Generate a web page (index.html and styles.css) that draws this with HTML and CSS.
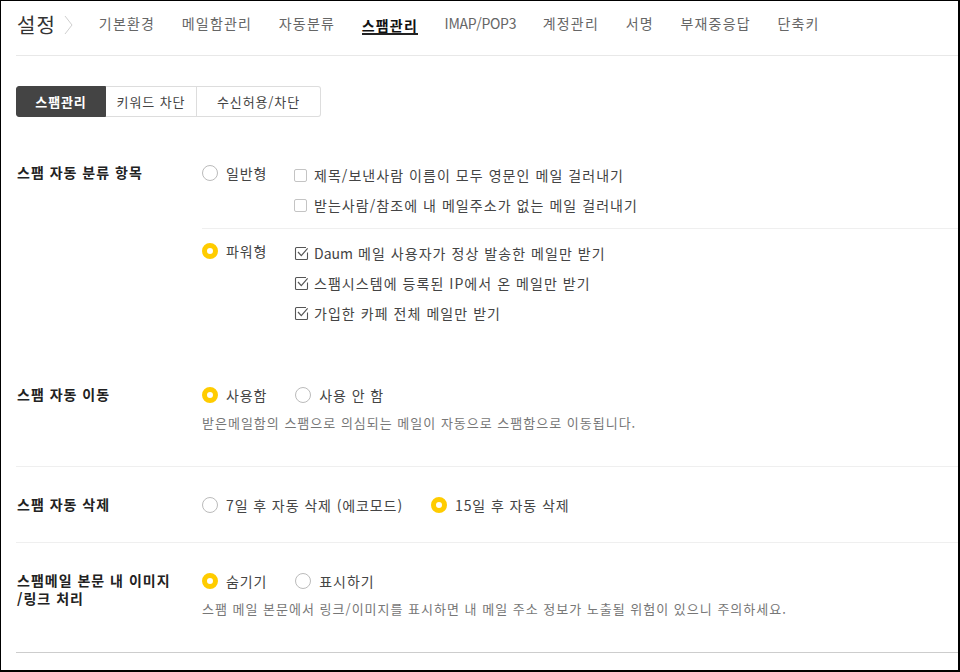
FILE: index.html
```html
<!DOCTYPE html>
<html lang="ko">
<head>
<meta charset="utf-8">
<title>설정 - 스팸관리</title>
<link rel="stylesheet" href="styles.css">
</head>
<body>
<div class="page">
  <header class="top">
    <h1 class="title">설정</h1>
    <svg class="chev" width="9" height="20" viewBox="0 0 9 20"><polyline points="1,1 8,10 1,19" fill="none" stroke="#cfcfcf" stroke-width="1"/></svg>
    <nav class="nav">
      <a class="nav-item">기본환경</a>
      <a class="nav-item">메일함관리</a>
      <a class="nav-item">자동분류</a>
      <a class="nav-item active">스팸관리</a>
      <a class="nav-item en">IMAP/POP3</a>
      <a class="nav-item">계정관리</a>
      <a class="nav-item">서명</a>
      <a class="nav-item">부재중응답</a>
      <a class="nav-item">단축키</a>
    </nav>
  </header>

  <div class="tabs">
    <a class="tab tab-a on">스팸관리</a>
    <a class="tab tab-b">키워드 차단</a>
    <a class="tab tab-c">수신허용/차단</a>
  </div>

  <section class="sec sec-first">
    <div class="label">스팸 자동 분류 항목</div>
    <div class="body">
      <div class="group g1">
        <label class="radio radio-col"><span class="dot"></span>일반형</label>
        <ul class="checks">
          <li class="check"><span class="box"></span>제목/보낸사람 이름이 모두 영문인 메일 걸러내기</li>
          <li class="check"><span class="box"></span>받는사람/참조에 내 메일주소가 없는 메일 걸러내기</li>
        </ul>
      </div>
      <div class="group g2">
        <label class="radio radio-col"><span class="dot sel"></span>파워형</label>
        <ul class="checks">
          <li class="check"><svg class="cbox" width="15" height="15" viewBox="0 0 15 15"><path d="M12 1.5H2.5a1 1 0 0 0-1 1v10a1 1 0 0 0 1 1h10a1 1 0 0 0 1-1V6.5" fill="none" stroke="#555" stroke-width="1.1"/><path d="M4 6 L7.3 9.6 L13.6 2.4" fill="none" stroke="#555" stroke-width="1.2"/></svg><span class="en">Daum</span>&nbsp;메일 사용자가 정상 발송한 메일만 받기</li>
          <li class="check"><svg class="cbox" width="15" height="15" viewBox="0 0 15 15"><path d="M12 1.5H2.5a1 1 0 0 0-1 1v10a1 1 0 0 0 1 1h10a1 1 0 0 0 1-1V6.5" fill="none" stroke="#555" stroke-width="1.1"/><path d="M4 6 L7.3 9.6 L13.6 2.4" fill="none" stroke="#555" stroke-width="1.2"/></svg>스팸시스템에 등록된 IP에서 온 메일만 받기</li>
          <li class="check"><svg class="cbox" width="15" height="15" viewBox="0 0 15 15"><path d="M12 1.5H2.5a1 1 0 0 0-1 1v10a1 1 0 0 0 1 1h10a1 1 0 0 0 1-1V6.5" fill="none" stroke="#555" stroke-width="1.1"/><path d="M4 6 L7.3 9.6 L13.6 2.4" fill="none" stroke="#555" stroke-width="1.2"/></svg>가입한 카페 전체 메일만 받기</li>
        </ul>
      </div>
    </div>
  </section>

  <section class="sec line">
    <div class="label">스팸 자동 이동</div>
    <div class="body">
      <div class="opts">
        <label class="radio"><span class="dot sel"></span>사용함</label>
        <label class="radio"><span class="dot"></span>사용 안 함</label>
      </div>
      <p class="desc">받은메일함의 스팸으로 의심되는 메일이 자동으로 스팸함으로 이동됩니다.</p>
    </div>
  </section>

  <section class="sec line">
    <div class="label">스팸 자동 삭제</div>
    <div class="body">
      <div class="opts">
        <label class="radio"><span class="dot"></span>7일 후 자동 삭제 (에코모드)</label>
        <label class="radio"><span class="dot sel"></span>15일 후 자동 삭제</label>
      </div>
    </div>
  </section>

  <section class="sec last">
    <div class="label">스팸메일 본문 내 이미지<br>/링크 처리</div>
    <div class="body">
      <div class="opts">
        <label class="radio"><span class="dot sel"></span>숨기기</label>
        <label class="radio"><span class="dot"></span>표시하기</label>
      </div>
      <p class="desc">스팸 메일 본문에서 링크/이미지를 표시하면 내 메일 주소 정보가 노출될 위험이 있으니 주의하세요.</p>
    </div>
  </section>
</div>
</body>
</html>
```

FILE: styles.css
```css
* { box-sizing: border-box; }
html, body { margin: 0; padding: 0; background: #fff; }
body {
  font-family: "Noto Sans CJK KR", "Noto Sans", sans-serif;
  color: #333;
  font-size: 14px;
}
.en { letter-spacing: 0; }
.page {
  width: 960px;
  height: 672px;
  border-style: solid;
  border-color: #000;
  border-width: 1px 2px 2px 1px;
  padding-left: 15px;
  overflow: hidden;
}
.top {
  display: flex;
  align-items: center;
  height: 55px;
  padding-bottom: 7px;
  border-bottom: 1px solid #e8e8e8;
}
.title {
  margin: 0 0 0 1px;
  font-size: 20px;
  font-weight: 400;
  line-height: 24px;
  letter-spacing: 1px;
  color: #333;
}
.chev { margin-left: 8px; margin-right: 26px; }
.nav { display: flex; gap: 26.6px; }
.nav-item {
  display: inline-block;
  font-size: 14px;
  line-height: 16px;
  letter-spacing: 1.2px;
  color: #666;
  white-space: nowrap;
}
.nav-item.en { letter-spacing: -0.3px; }
.nav-item.active {
  color: #111;
  font-weight: 700;
  border-bottom: 2px solid #222;
  margin-top: 2px;
}
.tabs {
  display: flex;
  margin-top: 30px;
  margin-bottom: 20px;
  height: 31px;
}
.tab {
  display: flex;
  align-items: center;
  justify-content: center;
  font-size: 13px;
  letter-spacing: 0.9px;
  color: #444;
  border: 1px solid #ddd;
  border-left: 0;
}
.tab-a { width: 90px; border-left: 1px solid #ddd; border-radius: 3px 0 0 3px; }
.tab-b { width: 91px; }
.tab-c { width: 124px; border-radius: 0 3px 3px 0; }
.tab.on { background: #444; border-color: #444; color: #fff; font-weight: 700; }

.sec {
  display: grid;
  grid-template-columns: 186px 1fr;
  padding: 23px 0 22px;
}
.sec-first { padding-bottom: 29px; }
.sec.line { border-bottom: 1px solid #efefef; }
.sec.last { border-bottom: 1px solid #cdcdcd; }
.label {
  padding: 5px 0 0 1px;
  font-weight: 700;
  font-size: 14px;
  line-height: 18px;
  letter-spacing: 1px;
  color: #222;
}
.sec-first .label { padding-top: 3px; }
.body { min-width: 0; }
.group { display: flex; }
.g1 { padding-bottom: 8px; border-bottom: 1px solid #efefef; }
.g2 { padding-top: 9px; }
.radio {
  display: inline-flex;
  align-items: center;
  line-height: 30px;
  letter-spacing: 0.9px;
  color: #444;
  white-space: nowrap;
}
.radio-col { width: 92px; align-self: flex-start; line-height: 26px; }
.dot {
  width: 16px;
  height: 16px;
  border-radius: 50%;
  border: 1px solid #bbb;
  background: #fff;
  margin-right: 8px;
  flex: none;
}
.dot.sel {
  border: 5px solid #ffcc00;
  background: #fff;
}
.checks { list-style: none; margin: 0; padding: 0; }
.check {
  display: flex;
  align-items: center;
  line-height: 30px;
  letter-spacing: 1.05px;
  color: #444;
  white-space: nowrap;
}
.box {
  width: 13px;
  height: 13px;
  border: 1px solid #c4c4c4;
  border-radius: 2px;
  margin-right: 7px;
  flex: none;
}
.cbox { margin-right: 5px; flex: none; }
.opts { display: flex; gap: 28px; }
.desc {
  margin: 3px 0 11px;
  font-size: 13px;
  line-height: 20px;
  letter-spacing: 1px;
  color: #777;
}
```
